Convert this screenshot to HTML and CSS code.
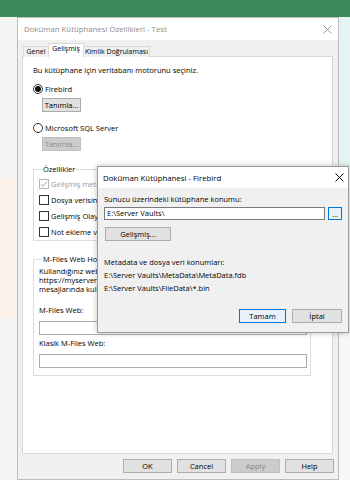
FILE: index.html
```html
<!DOCTYPE html>
<html lang="tr">
<head>
    <meta charset="UTF-8">
    <meta name="viewport" content="width=device-width, initial-scale=1.0">
    <link rel="stylesheet" href="styles.css">
    <title>Doküman Kütüphanesi Özellikleri</title>
</head>
<body>
<div class="desktop">
    <div class="taskbar"></div>
    <div class="workspace">
        <div class="strip-left">
            <div class="strip-gray"></div>
            <div class="strip-peach"></div>
        </div>

        <div class="window main-window">
            <div class="titlebar">
                <span class="title">Doküman Kütüphanesi Özellikleri - Test</span>
                <svg class="close" width="9" height="9" viewBox="0 0 9 9"><path d="M0.5 0.5L8.5 8.5M8.5 0.5L0.5 8.5" stroke="#9a9a9a" stroke-width="1"/></svg>
            </div>
            <div class="window-body">
                <div class="tabs">
                    <div class="tab">Genel</div>
                    <div class="tab active">Gelişmiş</div>
                    <div class="tab">Kimlik Doğrulaması</div>
                </div>
                <div class="panel">
                    <div class="intro">Bu kütüphane için veritabanı motorunu seçiniz.</div>

                    <div class="radio-row first">
                        <span class="radio checked"></span>
                        <span>Firebird</span>
                    </div>
                    <div class="btn-row">
                        <button class="btn">Tanımla...</button>
                    </div>

                    <div class="radio-row">
                        <span class="radio"></span>
                        <span>Microsoft SQL Server</span>
                    </div>
                    <div class="btn-row">
                        <button class="btn disabled">Tanımla...</button>
                    </div>

                    <fieldset class="group features">
                        <legend>Özellikler</legend>
                        <div class="check-row disabled">
                            <span class="checkbox checked">
                                <svg width="8" height="8" viewBox="0 0 8 8"><path d="M1 4.2L3 6.2L7 1.6" fill="none" stroke="#a8a8a8" stroke-width="1"/></svg>
                            </span>
                            <span>Gelişmiş metadata</span>
                        </div>
                        <div class="check-row">
                            <span class="checkbox"></span>
                            <span>Dosya verisini</span>
                        </div>
                        <div class="check-row">
                            <span class="checkbox"></span>
                            <span>Gelişmiş Olay</span>
                        </div>
                        <div class="check-row">
                            <span class="checkbox"></span>
                            <span>Not ekleme ve</span>
                        </div>
                    </fieldset>

                    <fieldset class="group web">
                        <legend>M-Files Web Host Adresi</legend>
                        <div class="web-text">
                            Kullandığınız web<br>
                            https://myserver.m<br>
                            mesajlarında kullanılır.
                        </div>
                        <div class="field-label first">M-Files Web:</div>
                        <div class="textbox"></div>
                        <div class="field-label second">Klasik M-Files Web:</div>
                        <div class="textbox"></div>
                    </fieldset>
                </div>
                <div class="dialog-buttons">
                    <button class="btn wide">OK</button>
                    <button class="btn wide">Cancel</button>
                    <button class="btn wide disabled">Apply</button>
                    <button class="btn wide">Help</button>
                </div>
            </div>
        </div>

        <div class="strip-right">
            <div class="strip-cyan"></div>
        </div>
    </div>

    <!-- pencere üstünde açılan ikinci dialog -->
    <div class="window popup">
        <div class="titlebar popup-title">
            <span class="title">Doküman Kütüphanesi - Firebird</span>
            <svg class="close" width="9" height="9" viewBox="0 0 9 9"><path d="M0.5 0.5L8.5 8.5M8.5 0.5L0.5 8.5" stroke="#111" stroke-width="1"/></svg>
        </div>
        <div class="popup-body">
            <div class="popup-label">Sunucu üzerindeki kütüphane konumu:</div>
            <div class="path-row">
                <div class="path-input">E:\Server Vaults\</div>
                <button class="btn browse">...</button>
            </div>
            <button class="btn advanced">Gelişmiş...</button>

            <div class="popup-label locations">Metadata ve dosya veri konumları:</div>
            <div class="path-line">E:\Server Vaults\MetaData\MetaData.fdb</div>
            <div class="path-line">E:\Server Vaults\FileData\*.bin</div>

            <div class="popup-buttons">
                <button class="btn default">Tamam</button>
                <button class="btn cancel">İptal</button>
            </div>
        </div>
    </div>
</div>
</body>
</html>
```

FILE: styles.css
```css
* {
    box-sizing: border-box;
}

body {
    margin: 0;
    font-family: 'Open Sans', 'Noto Sans', sans-serif;
    font-size: 7.5px;
    color: #000;
    background: #fff;
}

.desktop {
    position: relative;
    width: 350px;
    height: 480px;
    overflow: hidden;
}

.taskbar {
    height: 17px;
    background-color: #3b8b5b;
}

.workspace {
    display: flex;
    height: 463px;
}

.strip-left {
    width: 17px;
    background-color: #f3f3f3;
}

.strip-gray {
    height: 161px;
}

.strip-peach {
    height: 140px;
    background-color: #fdf3ec;
}

.strip-right {
    flex: 1;
    background-color: #f6f8f8;
}

.strip-cyan {
    height: 150px;
    background-color: #e4f4f2;
}

.window {
    background-color: #f0f0f0;
    border: 1px solid #bdbdbd;
}

.main-window {
    width: 322px;
    display: flex;
    flex-direction: column;
}

.titlebar {
    height: 22px;
    background-color: #fff;
    display: flex;
    align-items: center;
    justify-content: space-between;
    padding: 0 6px 0 6px;
}

.main-window .title {
    font-size: 7.8px;
    color: #8c8c8c;
}

.window-body {
    flex: 1;
    padding: 3px 5px 0 4px;
}

.tabs {
    display: flex;
    align-items: flex-end;
    height: 14px;
    padding-left: 1px;
}

.tab {
    height: 11px;
    line-height: 9px;
    font-size: 7px;
    text-align: center;
    border: 1px solid #d9d9d9;
    border-bottom: none;
    background-color: #f0f0f0;
    white-space: nowrap;
}

.tab:first-child {
    width: 26px;
}

.tab.active {
    width: 36px;
    height: 14px;
    line-height: 10px;
    background-color: #fff;
    position: relative;
    z-index: 1;
    margin: 0 -1px;
}

.tab:last-child {
    width: 67px;
}

.panel {
    height: 398px;
    margin-top: -1px;
    background-color: #fff;
    border: 1px solid #d9d9d9;
    padding: 0 10px 0 9px;
}

.intro {
    margin-top: 8px;
    line-height: 11px;
    padding-left: 1px;
}

.radio-row {
    display: flex;
    align-items: center;
    gap: 2px;
    height: 11px;
    margin-top: 10px;
    padding-left: 1px;
}

.radio-row.first {
    margin-top: 7px;
}

.radio {
    width: 10px;
    height: 10px;
    border: 1px solid #333;
    border-radius: 50%;
    display: flex;
    align-items: center;
    justify-content: center;
}

.radio.checked::after {
    content: '';
    width: 6px;
    height: 6px;
    border-radius: 50%;
    background-color: #111;
}

.btn-row {
    margin-top: 4px;
    padding-left: 10px;
}

.btn {
    font-family: inherit;
    font-size: 7.5px;
    color: #000;
    background-color: #e1e1e1;
    border: 1px solid #adadad;
    height: 14px;
    padding: 0;
    line-height: 12px;
    display: block;
}

.btn-row .btn {
    width: 39px;
}

.btn.disabled {
    background-color: #cccccc;
    border-color: #bfbfbf;
    color: #8a8a8a;
}

.group {
    margin: 0;
    border: 1px solid #dcdcdc;
    padding: 0 0 0 5px;
}

.group legend {
    padding: 0 1px;
    margin-left: 3px;
    line-height: 10px;
}

.features {
    margin: 13px 11px 0 1px;
    height: 77px;
}

.check-row {
    display: flex;
    align-items: center;
    gap: 2px;
    height: 11px;
    margin-top: 5px;
    white-space: nowrap;
}

.check-row:first-of-type {
    margin-top: 4px;
}

.check-row.disabled {
    color: #9a9a9a;
}

.checkbox {
    flex: none;
    width: 10px;
    height: 10px;
    border: 1px solid #333;
    display: flex;
    align-items: center;
    justify-content: center;
}

.check-row.disabled .checkbox {
    border-color: #b5b5b5;
}

.web {
    margin: 13px 11px 0 1px;
    height: 122px;
    padding-right: 3px;
}

.web-text {
    margin-top: 3px;
    line-height: 9px;
    white-space: nowrap;
}

.field-label {
    line-height: 11px;
}

.field-label.first {
    margin-top: 11px;
}

.field-label.second {
    margin-top: 3px;
}

.textbox {
    height: 14px;
    margin-top: 5px;
    border: 1px solid #adadad;
    background-color: #fff;
}

.dialog-buttons {
    display: flex;
    justify-content: flex-end;
    gap: 5px;
    margin-top: 5px;
    margin-right: -1px;
}

.btn.wide {
    width: 49px;
}

/* Firebird dialog */
.popup {
    position: absolute;
    left: 97px;
    top: 166px;
    width: 252px;
    height: 167px;
    border-color: #9a9a9a;
    box-shadow: 0 0 6px rgba(0, 0, 0, 0.25);
}

.popup-title {
    height: 21px;
    padding: 0 4px 0 5px;
}

.popup-title .title {
    font-size: 7.8px;
}

.popup-body {
    padding: 0 6px 0 6px;
}

.popup-label {
    margin-top: 6px;
    line-height: 11px;
}

.path-row {
    display: flex;
    gap: 3px;
    margin-top: 2px;
}

.path-input {
    width: 221px;
    height: 13px;
    line-height: 11px;
    padding-left: 2px;
    background-color: #fff;
    border: 1px solid #7a7a7a;
}

.btn.browse {
    width: 14px;
    height: 13px;
    line-height: 8px;
    border-color: #0078d7;
    background-color: #e5f1fb;
}

.btn.advanced {
    width: 66px;
    margin-top: 7px;
    margin-left: 1px;
}

.popup-label.locations {
    margin-top: 16px;
}

.path-line {
    margin-top: 2px;
    line-height: 11px;
}

.popup-buttons {
    display: flex;
    justify-content: flex-end;
    gap: 6px;
    margin-top: 15px;
}

.btn.default {
    width: 47px;
    border-color: #0078d7;
    background-color: #e5f1fb;
}

.btn.cancel {
    width: 50px;
}
```
